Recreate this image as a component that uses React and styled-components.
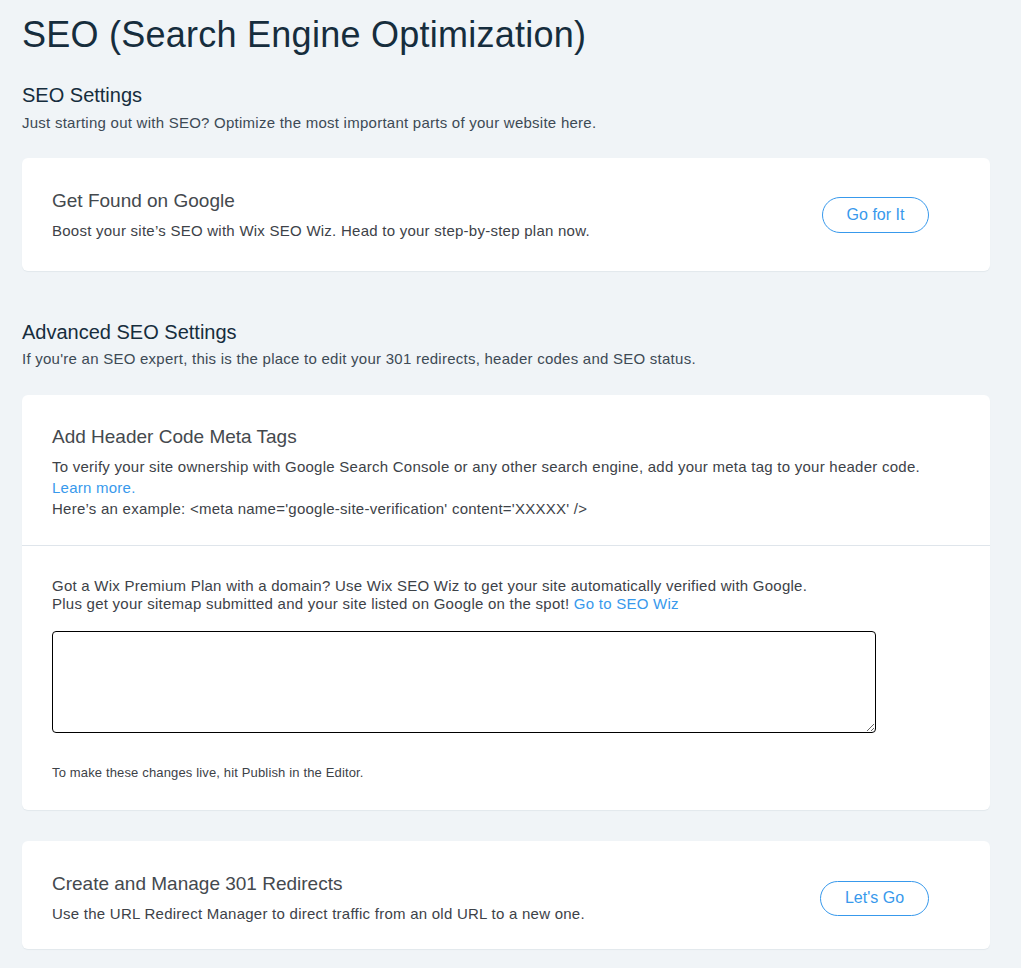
import styled, { createGlobalStyle } from "styled-components";

const GlobalStyle = createGlobalStyle`
  body {
    margin: 0;
    background: #f0f4f7;
    font-family: "Liberation Sans", Arial, sans-serif;
    color: #162d3d;
  }
  * {
    box-sizing: border-box;
  }
`;

const Page = styled.div`
  padding: 12px 31px 20px 22px;
  width: 1021px;
`;

const PageTitle = styled.h1`
  font-size: 36px;
  font-weight: normal;
  margin: 0 0 25px 0;
  line-height: 46px;
  letter-spacing: 0.25px;
  color: #162d3d;
`;

const Section = styled.section`
  margin-bottom: ${(p) => p.gap || 30}px;
`;

const SectionTitle = styled.h2`
  font-size: 20px;
  font-weight: normal;
  margin: 0;
  line-height: 24px;
  color: #162d3d;
`;

const SectionSub = styled.p`
  font-size: 15px;
  letter-spacing: 0.25px;
  margin: ${(p) => p.mt || 6}px 0 ${(p) => p.mb || 25}px 0;
  line-height: 20px;
  color: #3d4a55;
`;

const Card = styled.div`
  background: #fff;
  border-radius: 6px;
  box-shadow: 0 1px 1px rgba(22, 45, 61, 0.06);
  margin-bottom: ${(p) => p.gap || 0}px;
`;

const CardRow = styled.div`
  display: flex;
  align-items: center;
  justify-content: space-between;
  padding: ${(p) => p.pt || 0}px 61px 0 30px;
  height: ${(p) => p.h}px;
`;

const CardBlock = styled.div`
  padding: ${(p) => p.pad};
  border-bottom: ${(p) => (p.divider ? "1px solid #dfe5eb" : "none")};
`;

const CardTitle = styled.h3`
  font-size: 19px;
  font-weight: normal;
  margin: 0 0 7px 0;
  line-height: 24px;
  color: #44494e;
`;

const CardText = styled.p`
  font-size: 15px;
  letter-spacing: 0.25px;
  margin: 0;
  line-height: ${(p) => p.lh || 21}px;
  color: #3d4248;
`;

const Link = styled.a`
  color: #3899ec;
  text-decoration: none;
  cursor: pointer;
`;

const OutlineButton = styled.button`
  font-family: inherit;
  font-size: 16px;
  color: #3899ec;
  background: #fff;
  border: 1px solid #3899ec;
  border-radius: 18px;
  height: ${(p) => p.h || 36}px;
  width: ${(p) => p.w}px;
  cursor: pointer;
`;

const CodeArea = styled.textarea`
  display: block;
  width: 824px;
  height: 102px;
  margin: 18px 0 32px 0;
  border: 1px solid #000;
  border-radius: 4px;
  font-family: inherit;
  font-size: 14px;
  padding: 8px;
  outline: none;
`;

const Note = styled.p`
  font-size: 13px;
  letter-spacing: 0.15px;
  margin: 0;
  line-height: 16px;
  color: #3d4248;
`;

export default function App() {
  return (
    <>
      <GlobalStyle />
      <Page>
        <PageTitle>SEO (Search Engine Optimization)</PageTitle>

        <Section gap={49}>
          <SectionTitle>SEO Settings</SectionTitle>
          <SectionSub>
            Just starting out with SEO? Optimize the most important parts of your website here.
          </SectionSub>
          <Card>
            <CardRow h={113}>
              <div>
                <CardTitle>Get Found on Google</CardTitle>
                <CardText>
                  Boost your site’s SEO with Wix SEO Wiz. Head to your step-by-step plan now.
                </CardText>
              </div>
              <OutlineButton w={107}>Go for It</OutlineButton>
            </CardRow>
          </Card>
        </Section>

        <Section>
          <SectionTitle>Advanced SEO Settings</SectionTitle>
          <SectionSub mt={5} mb={26}>
            If you're an SEO expert, this is the place to edit your 301 redirects, header codes and SEO status.
          </SectionSub>
          <Card gap={31}>
            <CardBlock divider pad="30px 30px 26px 30px">
              <CardTitle>Add Header Code Meta Tags</CardTitle>
              <CardText>
                To verify your site ownership with Google Search Console or any other search engine, add your meta tag to your header code.
                <br />
                <Link>Learn more.</Link>
                <br />
                Here’s an example: &lt;meta name='google-site-verification' content='XXXXX' /&gt;
              </CardText>
            </CardBlock>
            <CardBlock pad="31px 30px 29px 30px">
              <CardText lh={18}>
                Got a Wix Premium Plan with a domain? Use Wix SEO Wiz to get your site automatically verified with Google.
                <br />
                Plus get your sitemap submitted and your site listed on Google on the spot!{" "}
                <Link>Go to SEO Wiz</Link>
              </CardText>
              <CodeArea />
              <Note>To make these changes live, hit Publish in the Editor.</Note>
            </CardBlock>
          </Card>
          <Card>
            <CardRow h={108} pt={6}>
              <div>
                <CardTitle>Create and Manage 301 Redirects</CardTitle>
                <CardText>
                  Use the URL Redirect Manager to direct traffic from an old URL to a new one.
                </CardText>
              </div>
              <OutlineButton w={109} h={35}>Let's Go</OutlineButton>
            </CardRow>
          </Card>
        </Section>
      </Page>
    </>
  );
}
